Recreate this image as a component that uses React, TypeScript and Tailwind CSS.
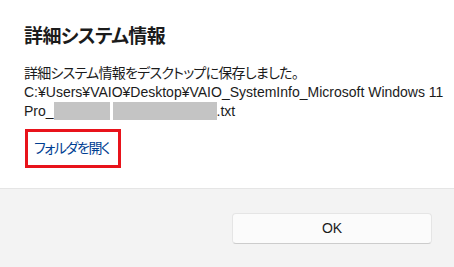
const FONT = "font-['Liberation_Sans','Noto_Sans_CJK_JP',sans-serif] [font-feature-settings:'palt']";

function Redacted({ w }: { w: string }) {
  return <span className={`inline-block h-[18px] align-[-4px] bg-[#c4c4c4] ${w}`} />;
}

export default function App() {
  return (
    <div className={`flex h-[267px] w-[454px] flex-col bg-white text-[#1b1b1b] ${FONT}`}>
      <div className="flex-1 px-6 pt-[23px]">
        <h1 className="text-[19px] font-semibold leading-[28px] tracking-[-0.6px]">詳細システム情報</h1>
        <div className="mt-[13px] whitespace-nowrap text-[14px] leading-[19px]">
          <div className="tracking-[-0.75px]">詳細システム情報をデスクトップに保存しました。</div>
          <div>C:¥Users¥VAIO¥Desktop¥VAIO_SystemInfo_Microsoft Windows 11</div>
          <div>
            Pro_
            <Redacted w="w-[56px]" />
            <span className="inline-block w-[3px]" />
            <Redacted w="w-[104px]" />
            .txt
          </div>
        </div>
        <button
          type="button"
          className="ml-px mt-[8px] flex h-[39px] w-[96px] items-center whitespace-nowrap border-[3px] border-[#e8131b] pl-[6px] text-[14px] tracking-[-1.4px] text-[#003e92]"
        >
          フォルダを開く
        </button>
      </div>
      <div className="flex h-[79px] justify-end border-t border-[#e5e5e5] bg-[#f3f3f3] pr-[22px] pt-6">
        <button
          type="button"
          className="h-[31px] w-[200px] rounded-[4px] border border-[#e5e5e5] border-b-[#cccccc] bg-[#fbfbfb] text-[14px] text-[#1b1b1b]"
        >
          OK
        </button>
      </div>
    </div>
  );
}
